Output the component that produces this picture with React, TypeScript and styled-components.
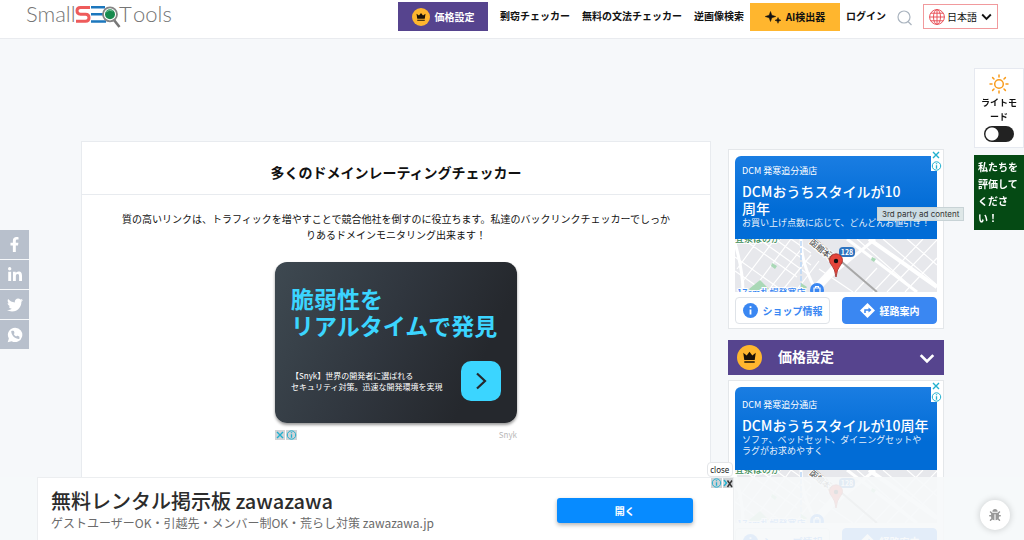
import React from "react";
import styled, { createGlobalStyle, css } from "styled-components";
import { FaBug, FaFacebookF, FaLinkedinIn, FaTwitter } from "react-icons/fa";

const GlobalStyle = createGlobalStyle`
  * { box-sizing: border-box; }
  html { scrollbar-width: none; }
  body {
    margin: 0;
    background: #f6f8fa;
    color: #111;
    font-family: "Noto Sans CJK JP", "Noto Sans", sans-serif;
    font-size: 10px;
    line-height: 16px;
  }
  button, select, input { font: inherit; color: inherit; margin: 0; padding: 0; }
  button { border: 0; background: none; cursor: pointer; }
  a { color: inherit; text-decoration: none; }
  h1, h2, p { margin: 0; }
  svg { display: block; flex: none; }
`;

/* ---------- header ---------- */

const Header = styled.header`
  display: flex;
  justify-content: space-between;
  align-items: flex-start;
  height: 39px;
  padding: 2px 26px 0;
  background: #fff;
  border-bottom: 1px solid #e9ebef;
`;

const LogoDrawing = styled.svg`
  overflow: visible;
`;

const Nav = styled.nav`
  display: flex;
  align-items: center;
  height: 29px;
  font-weight: 700;
  white-space: nowrap;
`;

const NavLink = styled.a`
  padding: 0 6px 2px;
`;

const NavButton = styled.a<{ $tone: "purple" | "amber" }>`
  display: flex;
  align-items: center;
  justify-content: center;
  gap: 5px;
  width: 90px;
  ${({ $tone }) =>
    $tone === "purple"
      ? css`
          height: 29px;
          margin-right: 6px;
          background: #56448e;
          color: #fff;
        `
      : css`
          height: 28px;
          background: #ffb62e;
          color: #111;
        `}
`;

const SearchButton = styled.button`
  margin: 2px 11px 0 5px;
`;

const LanguageBox = styled.label`
  display: flex;
  align-items: center;
  gap: 2px;
  width: 75px;
  height: 25px;
  padding: 0 5px;
  border: 1px solid #f19a9d;
  font-weight: 400;
`;

const LanguageSelect = styled.select`
  width: 32px;
  appearance: none;
  border: 0;
  background: none;
`;

/* ---------- page body ---------- */

const Content = styled.div`
  display: grid;
  grid-template-columns: minmax(0, 1fr) 216px;
  gap: 17px;
  padding: 102px 80px 0 81px;
`;

const Card = styled.main`
  min-height: 440px;
  background: #fff;
  border: 1px solid #e8ebef;
`;

const CardTitle = styled.h1`
  padding: 20px 16px 12px;
  border-bottom: 1px solid #e8ebef;
  font-size: 14px;
  line-height: 20px;
  text-align: center;
`;

const CardBody = styled.div`
  display: flex;
  flex-direction: column;
  align-items: center;
  padding: 16px 38px;
`;

const Lead = styled.p`
  text-align: center;
`;

const Promo = styled.section`
  width: 242px;
  margin-top: 19px;
`;

const PromoPanel = styled.a`
  display: flex;
  flex-direction: column;
  justify-content: space-between;
  height: 161px;
  padding: 23px 16px 22px;
  border-radius: 12px;
  background: linear-gradient(115deg, #3e4951 0%, #30363e 45%, #25282d 80%);
  box-shadow: 0 2px 3px rgba(0, 0, 0, 0.4);
  color: #fff;
`;

const PromoTitle = styled.h2`
  color: #3bd5ff;
  font-size: 23px;
  line-height: 27px;
  white-space: nowrap;
`;

const PromoRow = styled.div`
  display: flex;
  align-items: center;
  justify-content: space-between;
`;

const PromoText = styled.p`
  font-size: 8px;
  line-height: 11px;
  white-space: nowrap;
`;

const PromoArrow = styled.span`
  display: grid;
  place-items: center;
  width: 40px;
  height: 40px;
  border-radius: 10px;
  background: #3bd5ff;
`;

const PromoFooter = styled.div`
  display: flex;
  justify-content: space-between;
  align-items: center;
  margin-top: 4px;
  color: #b9b9b9;
  font-size: 8px;
`;

const Marks = styled.span<{ $stacked?: boolean }>`
  display: flex;
  flex-direction: ${({ $stacked }) => ($stacked ? "column" : "row")};
  gap: 1px;
`;

const MarkButton = styled.button<{ $bg: string }>`
  padding: 0;
  background: ${({ $bg }) => $bg};
`;

/* ---------- sidebar ---------- */

const Sidebar = styled.aside`
  display: flex;
  flex-direction: column;
  padding-top: 8px;
`;

const AdBox = styled.section`
  position: relative;
  padding: 6px 6px 4px;
  border: 1px solid #e4e7ea;
  background: #fff;
`;

const AdMarks = styled.div`
  position: absolute;
  top: 0;
  right: 1px;
  background: #fff;
`;

const AdBanner = styled.a`
  display: flex;
  flex-direction: column;
  justify-content: center;
  height: 83px;
  padding: 0 0 2px 7px;
  border-radius: 6px 0 0 0;
  background: linear-gradient(#1a7de2, #016cd6 65%);
  color: #fff;
`;

const AdShop = styled.span`
  font-size: 9px;
  line-height: 12px;
`;

const AdTitle = styled.h2`
  margin-top: 6px;
  font-size: 14px;
  font-weight: 500;
  line-height: 17px;
  white-space: pre-line;
`;

const AdText = styled.p`
  font-size: 9px;
  line-height: 11px;
  white-space: nowrap;
  opacity: 0.9;
`;

const AdActions = styled.div`
  display: grid;
  grid-template-columns: 1fr 1fr;
  gap: 12px;
  margin-top: 5px;
`;

const AdAction = styled.a<{ $filled?: boolean }>`
  display: flex;
  align-items: center;
  justify-content: center;
  gap: 5px;
  height: 27px;
  border: 1px solid ${({ $filled }) => ($filled ? "#3a87f2" : "#dfe3e8")};
  border-radius: 4px;
  background: ${({ $filled }) => ($filled ? "#3a87f2" : "#fff")};
  color: ${({ $filled }) => ($filled ? "#fff" : "#3a87f2")};
  font-weight: 700;
  white-space: nowrap;
`;

const Tooltip = styled.span`
  position: absolute;
  top: 57px;
  left: 148px;
  padding: 0 4px;
  border: 1px solid #c8d3d6;
  background: rgba(219, 229, 229, 0.92);
  color: #333;
  font-family: Inter, "Noto Sans", sans-serif;
  font-size: 8px;
  line-height: 12px;
  white-space: nowrap;
`;

const PriceBar = styled.button`
  display: flex;
  align-items: center;
  width: 100%;
  height: 35px;
  margin: 11px 0 5px;
  padding: 0 9px;
  background: #56448e;
  color: #fff;
  font-size: 14px;
  font-weight: 700;
`;

const PriceLabel = styled.span`
  flex: 1;
  padding: 0 16px 4px;
  text-align: left;
`;

/* ---------- floating parts ---------- */

const ShareRail = styled.nav`
  position: fixed;
  top: 230px;
  left: 0;
  display: flex;
  flex-direction: column;
  gap: 1px;
`;

const ShareLink = styled.a`
  display: grid;
  place-items: center;
  width: 29px;
  height: 29px;
  background: #b8c0cc;
  color: #fff;
`;

const SideTools = styled.div`
  position: fixed;
  top: 68px;
  right: 0;
  display: flex;
  flex-direction: column;
  gap: 7px;
  width: 50px;
  font-weight: 700;
`;

const ModeBox = styled.label`
  display: flex;
  flex-direction: column;
  align-items: center;
  gap: 2px;
  height: 80px;
  padding-top: 5px;
  border: 1px solid #e6e9f0;
  background: #fff;
  font-size: 9px;
  line-height: 14px;
  text-align: center;
`;

const ModeSwitch = styled.input`
  appearance: none;
  width: 30px;
  height: 16px;
  border-radius: 8px;
  background: radial-gradient(circle at 8px 8px, #fff 6px, #222 7px);
`;

const RateLink = styled.a`
  padding: 3px 4px 4px;
  background: #054a14;
  color: #fff;
  line-height: 17px;
`;

const BottomStrip = styled.div`
  position: fixed;
  right: 0;
  bottom: 0;
  left: 0;
  padding-left: 37px;
  background: rgba(246, 248, 250, 0.9);
`;

const BottomAd = styled.section`
  position: relative;
  display: flex;
  align-items: center;
  justify-content: space-between;
  width: 70.6%;
  height: 63px;
  padding: 2px 40px 0 13px;
  background: #fff;
  border: 1px solid #eceef0;
  border-bottom: 0;
`;

const BottomTitle = styled.h2`
  color: #2c2c2c;
  font-size: 20px;
  font-weight: 500;
  line-height: 26px;
  white-space: nowrap;
`;

const BottomText = styled.p`
  color: #6b6b6b;
  font-size: 12px;
  line-height: 18px;
  white-space: nowrap;
`;

const OpenLink = styled.a`
  width: 136px;
  border-radius: 3px;
  background: #078bff;
  box-shadow: 0 2px 4px rgba(0, 0, 0, 0.3);
  color: #fff;
  font-weight: 700;
  line-height: 25px;
  text-align: center;
`;

const CloseCorner = styled.div`
  position: absolute;
  top: -16px;
  right: 0;
  display: flex;
  flex-direction: column;
  align-items: flex-end;
  gap: 1px;
`;

const CloseButton = styled.button`
  width: 26px;
  height: 15px;
  border: 1px solid #e3e5e8;
  border-radius: 4px;
  background: #fff;
  color: #222;
  font-family: "Noto Sans", sans-serif;
  font-size: 8px;
  line-height: 12px;
`;

const BugButton = styled.button`
  position: fixed;
  right: 14px;
  bottom: 10px;
  display: grid;
  place-items: center;
  width: 30px;
  height: 30px;
  border-radius: 50%;
  background: #fff;
  box-shadow: 0 0 6px 1px rgba(0, 0, 0, 0.15);
  color: #999;
`;

/* ---------- drawings ---------- */

const Logo = () => (
  <LogoDrawing width="148" height="28" viewBox="26 2 148 28" role="img" aria-label="SmallSEOTools">
    <g fill="#757575" fontFamily="Lato" fontWeight="300" fontSize="22">
      <text x="26" y="22">Small</text>
      <text x="119" y="22">T</text>
      <text x="133" y="22">ools</text>
    </g>
    <path d="M90 7.500H80.500q-3.500 0-3.500 3.300t3.500 3.400h5q3.500 0 3.500 3.500t-3.500 3.600H76" fill="none" stroke="#ee5b5b" strokeWidth="3" />
    <path d="M91 7.200h14M91 14.300h14M91 21.500h15" stroke="#1c77bd" strokeWidth="2.400" />
    <path d="M114 20l5.500 7" stroke="#777" strokeWidth="2.600" />
    <circle cx="110" cy="14.300" r="7" fill="#fff" stroke="#858585" strokeWidth="1.800" />
    <circle cx="110" cy="14.300" r="5" fill="#178a4e" />
    <path d="M106 12q3-3 7-1" stroke="#6fbd92" fill="none" />
  </LogoDrawing>
);

const Crown = ({ size }: { size: number }) => (
  <svg width={size} height={size} viewBox="0 0 24 24" aria-hidden="true">
    <circle cx="12" cy="12" r="12" fill="#ffb62e" />
    <path d="M6 7.500l3.300 2.500L12 6.500l2.700 3.500L18 7.500l-1 6.800H7z M7 15.500h10v1.500H7z" fill="#1a1208" />
  </svg>
);

const Sparkles = () => (
  <svg width="16" height="14" viewBox="0 0 16 14" aria-hidden="true">
    <path d="M5.500 1.500l1.300 3.700 4 1.300-4 1.300-1.300 3.700-1.300-3.700-4-1.300 4-1.300zM13 7.500l.8 2 2.200.8-2.200.8-.8 2.200-.8-2.200-2.200-.8 2.200-.8z" fill="#111" stroke="#111" strokeWidth=".5" />
  </svg>
);

const SearchIcon = () => (
  <svg width="15" height="16" viewBox="0 0 15 16" fill="none" stroke="#aab4bf" strokeWidth="1.200" aria-hidden="true">
    <circle cx="7" cy="7" r="6" />
    <path d="M11 11.500l3.500 3.500" />
  </svg>
);

const Globe = () => (
  <svg width="16" height="16" viewBox="0 0 16 16" fill="none" stroke="#e9525a" aria-hidden="true">
    <circle cx="8" cy="8" r="7.400" />
    <ellipse cx="8" cy="8" rx="3.500" ry="7.400" />
    <path d="M8 .5v15M.5 8h15M2 4.200h12M2 11.800h12" />
  </svg>
);

const Chevron = ({ size, color }: { size: number; color: string }) => (
  <svg width={size} height={size} viewBox="0 0 14 14" fill="none" stroke={color} strokeWidth="2.400" aria-hidden="true">
    <path d="M1.500 4.500L7 10l5.500-5.500" />
  </svg>
);

const Sun = () => (
  <svg width="20" height="20" viewBox="0 0 20 20" fill="none" stroke="#f99c1c" strokeWidth="1.500" strokeLinecap="round" aria-hidden="true">
    <circle cx="10" cy="10" r="4.300" />
    <path d="M10 1v2M10 17v2M1 10h2M17 10h2M3.600 3.600L5 5M15 15l1.400 1.400M3.600 16.400L5 15M15 5l1.400-1.400" />
  </svg>
);

const WhatsappIcon = () => (
  <svg width="16" height="16" viewBox="0 0 24 24" aria-hidden="true">
    <path d="M12.300 1a10.800 10.800 0 0 0-9.500 16.200L1 23l6-1.700A10.800 10.800 0 1 0 12.300 1z" fill="#fff" />
    <path
      transform="translate(5 4.500) scale(.62)"
      d="M22 16.920v3a2 2 0 0 1-2.180 2 19.790 19.790 0 0 1-8.630-3.070 19.500 19.500 0 0 1-6-6 19.790 19.790 0 0 1-3.070-8.670A2 2 0 0 1 4.110 2h3a2 2 0 0 1 2 1.720 12.840 12.840 0 0 0 .7 2.810 2 2 0 0 1-.45 2.110L8.090 9.910a16 16 0 0 0 6 6l1.270-1.270a2 2 0 0 1 2.110-.45 12.840 12.840 0 0 0 2.810.7A2 2 0 0 1 22 16.920z"
      fill="#b8c0cc"
    />
  </svg>
);

const CrossMark = ({ dark }: { dark?: boolean }) => (
  <svg width="10" height="10" viewBox="0 0 10 10" stroke="#22b0cf" strokeWidth="1.400" aria-hidden="true">
    {dark ? (
      <>
        <path d="M1 2l2.500 3L1 8" fill="none" />
        <path d="M4.500 2.500L9 9M9 2.500L4.500 9" stroke="#333" />
      </>
    ) : (
      <path d="M2 2l6 6M8 2L2 8" />
    )}
  </svg>
);

const InfoMark = () => (
  <svg width="11" height="10" viewBox="0 0 11 10" fill="none" stroke="#22b0cf" aria-hidden="true">
    <circle cx="5.500" cy="5" r="4.200" />
    <path d="M5.500 4.200v3.500M5.500 2.200v1.100" strokeWidth="1.300" />
  </svg>
);

const InfoDot = () => (
  <svg width="15" height="15" viewBox="0 0 15 15" aria-hidden="true">
    <circle cx="7.500" cy="7.500" r="7.500" fill="#3a87f2" />
    <path d="M7.500 6.500v5M7.500 3.300v1.800" stroke="#fff" strokeWidth="1.800" />
  </svg>
);

const RouteIcon = () => (
  <svg width="15" height="15" viewBox="0 0 15 15" aria-hidden="true">
    <path d="M7.500 0L15 7.500 7.500 15 0 7.500z" fill="#fff" />
    <path d="M5 10V7h4.500" fill="none" stroke="#3a87f2" strokeWidth="1.500" />
    <path d="M8.500 4.500L11.500 7l-3 2.500z" fill="#3a87f2" />
  </svg>
);

const StreetMap = () => (
  <svg width="100%" height="53" viewBox="0 0 202 53" preserveAspectRatio="xMidYMid slice" role="img" aria-label="地図">
    <rect width="202" height="53" fill="#e7e8ec" />
    <g stroke="#fff" strokeWidth="1.200" fill="none">
      <path d="M8 0l54 38M24 0l50 36M40 0l36 26M0 18l52 37M0 32l30 21M56 0l20 14M2 30L24 0M8 42L40 0M20 48L56 0M32 53L68 8M46 53L76 16M60 53L84 22" />
      <path d="M138 53l50-53M152 53l50-52M120 53l22-24M170 53l32-34M122 0l60 53M148 0l54 46M172 0l30 26M84 30l34 23M90 8l20 14" />
    </g>
    <g stroke="#fff" fill="none">
      <path d="M0 4q8 28 8 49M76 53L140 0" strokeWidth="3" />
      <path d="M66 0q0 26 16 53M112 0l70 53" strokeWidth="3" />
      <path d="M134 0l68 48" strokeWidth="4" />
      <path d="M78 53L116 12" strokeWidth="8" />
    </g>
    <path d="M66 2v51" stroke="#bad6f6" strokeWidth="1.500" strokeDasharray="5 2" />
    <path d="M80 0l62 53" stroke="#a8a8a8" strokeWidth="2" />
    <path d="M14 50l11-9 9 9-18 3zM37 24l5 3-2 3-4-3zM137 18l4 2-2 3-3-2zM66 44l6 4-4 5h-2z" fill="#a9d8b6" />
    <g fontSize="9" fontWeight="500" stroke="#fff" strokeWidth="2" paintOrder="stroke">
      <text x="0" y="3" fill="#3b8b56">宜泉ほのか</text>
      <text x="2" y="57" fill="#3a87f2" fontSize="9">17cm札幌発寒店</text>
      <text x="74" y="4" fill="#555" fontSize="8" transform="rotate(40 74 4)">函館本線</text>
    </g>
    <circle cx="82" cy="51" r="7" fill="#3a87f2" />
    <path d="M79 49h6v5h-6zM80.500 49v-1.500h3V49" fill="none" stroke="#fff" strokeWidth="1.200" />
    <rect x="104" y="8" width="16" height="10" rx="4" fill="#2e74c0" />
    <text x="112" y="16" fill="#fff" fontSize="7" fontWeight="700" textAnchor="middle">128</text>
    <path d="M101 38q-1-8-4.500-12a6.500 6.500 0 1 1 9 0q-3.500 4-4.500 12z" fill="#e5443a" stroke="#9d2a24" strokeWidth=".8" />
    <circle cx="101" cy="22" r="2.200" fill="#111" />
  </svg>
);

/* ---------- composed parts ---------- */

const ChoiceMarks = ({ stacked, bg }: { stacked?: boolean; bg: string }) => (
  <Marks $stacked={stacked}>
    <MarkButton $bg={bg} aria-label="広告を閉じる">
      <CrossMark />
    </MarkButton>
    <MarkButton $bg={bg} aria-label="広告の情報">
      <InfoMark />
    </MarkButton>
  </Marks>
);

type StoreAdProps = {
  title: string;
  lines: string[];
  tooltip?: string;
};

const StoreAd = ({ title, lines, tooltip }: StoreAdProps) => (
  <AdBox>
    <AdBanner href="#">
      <AdShop>DCM 発寒追分通店</AdShop>
      <AdTitle>{title}</AdTitle>
      {lines.map((line) => (
        <AdText key={line}>{line}</AdText>
      ))}
    </AdBanner>
    <StreetMap />
    <AdActions>
      <AdAction href="#">
        <InfoDot />
        ショップ情報
      </AdAction>
      <AdAction href="#" $filled>
        <RouteIcon />
        経路案内
      </AdAction>
    </AdActions>
    <AdMarks>
      <ChoiceMarks stacked bg="#fff" />
    </AdMarks>
    {tooltip && <Tooltip role="tooltip">{tooltip}</Tooltip>}
  </AdBox>
);

export default function App() {
  return (
    <>
      <GlobalStyle />
      <Header>
        <a href="#">
          <Logo />
        </a>
        <Nav>
          <NavButton href="#" $tone="purple">
            <Crown size={18} />
            価格設定
          </NavButton>
          <NavLink href="#">剽窃チェッカー</NavLink>
          <NavLink href="#">無料の文法チェッカー</NavLink>
          <NavLink href="#">逆画像検索</NavLink>
          <NavButton href="#" $tone="amber">
            <Sparkles />
            AI検出器
          </NavButton>
          <NavLink href="#">ログイン</NavLink>
          <SearchButton aria-label="検索">
            <SearchIcon />
          </SearchButton>
          <LanguageBox>
            <Globe />
            <LanguageSelect aria-label="言語">
              <option>日本語</option>
            </LanguageSelect>
            <Chevron size={11} color="#111" />
          </LanguageBox>
        </Nav>
      </Header>

      <Content>
        <Card>
          <CardTitle>多くのドメインレーティングチェッカー</CardTitle>
          <CardBody>
            <Lead>
              質の高いリンクは、トラフィックを増やすことで競合他社を倒すのに役立ちます。私達のバックリンクチェッカーでしっかりあるドメインモニタリング出来ます！
            </Lead>
            <Promo>
              <PromoPanel href="#">
                <PromoTitle>
                  脆弱性を
                  <br />
                  リアルタイムで発見
                </PromoTitle>
                <PromoRow>
                  <PromoText>
                    【Snyk】世界の開発者に選ばれる
                    <br />
                    セキュリティ対策。迅速な開発環境を実現
                  </PromoText>
                  <PromoArrow>
                    <svg width="12" height="18" viewBox="0 0 12 18" fill="none" stroke="#25282d" strokeWidth="2.200" aria-hidden="true">
                      <path d="M2 1.500L10 9l-8 7.500" />
                    </svg>
                  </PromoArrow>
                </PromoRow>
              </PromoPanel>
              <PromoFooter>
                <ChoiceMarks bg="#d0d3d6" />
                <span>Snyk</span>
              </PromoFooter>
            </Promo>
          </CardBody>
        </Card>

        <Sidebar>
          <StoreAd
            title={"DCMおうちスタイルが10\n周年"}
            lines={["お買い上げ点数に応じて、どんどんお値引き！"]}
            tooltip="3rd party ad content"
          />
          <PriceBar>
            <Crown size={25} />
            <PriceLabel>価格設定</PriceLabel>
            <Chevron size={16} color="#fff" />
          </PriceBar>
          <StoreAd
            title="DCMおうちスタイルが10周年"
            lines={["ソファ、ベッドセット、ダイニングセットや", "ラグがお求めやすく"]}
          />
        </Sidebar>
      </Content>

      <ShareRail aria-label="共有">
        <ShareLink href="#" aria-label="Facebook">
          <FaFacebookF size={15} />
        </ShareLink>
        <ShareLink href="#" aria-label="LinkedIn">
          <FaLinkedinIn size={16} />
        </ShareLink>
        <ShareLink href="#" aria-label="Twitter">
          <FaTwitter size={16} />
        </ShareLink>
        <ShareLink href="#" aria-label="WhatsApp">
          <WhatsappIcon />
        </ShareLink>
      </ShareRail>

      <SideTools>
        <ModeBox>
          <Sun />
          <span>
            ライトモ
            <br />
            ード
          </span>
          <ModeSwitch type="checkbox" />
        </ModeBox>
        <RateLink href="#">私たちを評価してください！</RateLink>
      </SideTools>

      <BottomStrip>
        <BottomAd>
          <div>
            <BottomTitle>無料レンタル掲示板 zawazawa</BottomTitle>
            <BottomText>ゲストユーザーOK・引越先・メンバー制OK・荒らし対策 zawazawa.jp</BottomText>
          </div>
          <OpenLink href="#">開く</OpenLink>
          <CloseCorner>
            <CloseButton>close</CloseButton>
            <Marks>
              <MarkButton $bg="#d0d3d6" aria-label="広告の情報">
                <InfoMark />
              </MarkButton>
              <MarkButton $bg="#d0d3d6" aria-label="広告を閉じる">
                <CrossMark dark />
              </MarkButton>
            </Marks>
          </CloseCorner>
        </BottomAd>
      </BottomStrip>

      <BugButton aria-label="不具合を報告">
        <FaBug size={12} />
      </BugButton>
    </>
  );
}
